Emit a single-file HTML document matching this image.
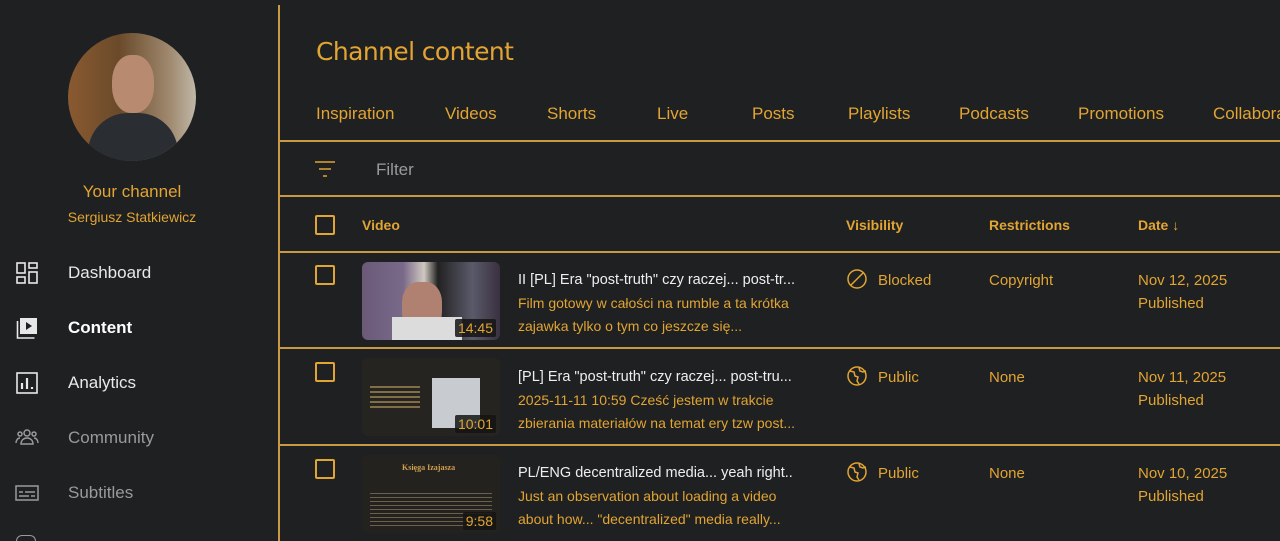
<!DOCTYPE html>
<html style="overflow:hidden;width:1280px;height:541px"><head><meta charset="utf-8"><style>
*{margin:0;padding:0;box-sizing:border-box}
body{width:1280px;height:541px;overflow:hidden;background:#1e2022;font-family:"Liberation Sans",sans-serif;position:relative}
.a{position:absolute;white-space:nowrap}
.g{color:#e2a432}
.w{color:#e8e8e8}
.gr{color:#9a9a9a}
.hl{position:absolute;left:279px;right:0;height:2px;background:#c99a45}
.cb{position:absolute;width:20px;height:20px;border:2px solid #e2a432;border-radius:2px}
.th{position:absolute;border-radius:6px;overflow:hidden;width:138px;height:78px;background:#111}
.dur{position:absolute;right:4px;bottom:3px;background:rgba(20,20,20,.85);color:#e2a432;font-size:14px;padding:1px 3px;border-radius:2px}
.t{font-size:14.5px;color:#eee}
.d{font-size:14px;color:#e2a432;line-height:23px}
.c{font-size:15px;color:#e2a432}
</style></head><body>
<div class="a" style="left:278px;top:5px;width:2px;height:536px;background:#c99a45"></div>
<div class="a" style="left:68px;top:33px;width:128px;height:128px;border-radius:50%;background:linear-gradient(90deg,#8a5a30,#6a4a2a 40%,#a08a70 80%,#c0b8a8);overflow:hidden">
<div style="position:absolute;left:20px;top:80px;width:90px;height:60px;border-radius:40px 40px 0 0;background:#2a2e33"></div>
<div style="position:absolute;left:44px;top:22px;width:42px;height:58px;border-radius:45%;background:#b88a70"></div></div>
<div class="a g" style="left:0;width:264px;text-align:center;top:182px;font-size:17px">Your channel</div>
<div class="a g" style="left:0;width:264px;text-align:center;top:209px;font-size:14px">Sergiusz Statkiewicz</div>
<svg class="a" style="left:16px;top:262px" width="22" height="22" viewBox="0 0 22 22" fill="none" stroke="#e8e8e8" stroke-width="1.6"><rect x="1" y="1" width="8" height="10"/><rect x="13" y="1" width="8" height="5"/><rect x="1" y="15" width="8" height="6"/><rect x="13" y="10" width="8" height="11"/></svg>
<div class="a w" style="left:68px;top:263px;font-size:17px">Dashboard</div>
<svg class="a" style="left:16px;top:317px" width="22" height="22" viewBox="0 0 22 22"><rect x="4" y="1" width="17" height="16" fill="#e8e8e8"/><path d="M10 5v8l6-4z" fill="#1e2022"/><path d="M1.5 4v17h17" fill="none" stroke="#e8e8e8" stroke-width="1.6"/></svg>
<div class="a" style="left:68px;top:318px;font-size:17px;color:#fff;font-weight:bold">Content</div>
<svg class="a" style="left:16px;top:372px" width="22" height="22" viewBox="0 0 22 22" fill="none" stroke="#e8e8e8" stroke-width="1.6"><rect x="1" y="1" width="20" height="20"/><path d="M6 17v-6M11 17V6M16 17v-2" stroke-width="2.2"/></svg>
<div class="a w" style="left:68px;top:373px;font-size:17px">Analytics</div>
<svg class="a" style="left:15px;top:428px" width="24" height="18" viewBox="0 0 24 18" fill="none" stroke="#9a9a9a" stroke-width="1.5"><circle cx="12" cy="5" r="3"/><path d="M6 16c0-4 3-6 6-6s6 2 6 6z"/><circle cx="5" cy="6" r="2"/><circle cx="19" cy="6" r="2"/><path d="M1 15c0-3 2-5 4-5M23 15c0-3-2-5-4-5"/></svg>
<div class="a gr" style="left:68px;top:428px;font-size:17px">Community</div>
<svg class="a" style="left:15px;top:485px" width="24" height="16" viewBox="0 0 24 16" fill="none" stroke="#9a9a9a" stroke-width="1.5"><rect x="1" y="1" width="22" height="14"/><path d="M4 7h4M10 7h10M4 11h10M16 11h4"/></svg>
<div class="a gr" style="left:68px;top:483px;font-size:17px">Subtitles</div>
<div class="a" style="left:16px;top:535px;width:20px;height:6px;border:1.6px solid #9a9a9a;border-bottom:none;border-radius:10px 10px 0 0"></div>
<div class="a g" style="left:316px;top:37px;font-size:25px;font-family:'DejaVu Sans',sans-serif;letter-spacing:-0.6px">Channel content</div>
<div class="a g" style="top:104px;left:316px;font-size:17px">Inspiration</div>
<div class="a g" style="top:104px;left:445px;font-size:17px">Videos</div>
<div class="a g" style="top:104px;left:547px;font-size:17px">Shorts</div>
<div class="a g" style="top:104px;left:657px;font-size:17px">Live</div>
<div class="a g" style="top:104px;left:752px;font-size:17px">Posts</div>
<div class="a g" style="top:104px;left:848px;font-size:17px">Playlists</div>
<div class="a g" style="top:104px;left:959px;font-size:17px">Podcasts</div>
<div class="a g" style="top:104px;left:1078px;font-size:17px">Promotions</div>
<div class="a g" style="top:104px;left:1213px;font-size:17px">Collaborations</div>
<div class="hl" style="top:140px"></div>
<svg class="a" style="left:314px;top:160px" width="22" height="18" viewBox="0 0 22 18" stroke="#e2a432" stroke-width="1.5"><path d="M1 2h20M5 9h12M9 16h4"/></svg>
<div class="a gr" style="left:376px;top:160px;font-size:17px">Filter</div>
<div class="hl" style="top:195px"></div>
<div class="cb" style="left:315px;top:215px"></div>
<div class="a g" style="left:362px;top:217px;font-size:14px;font-weight:bold">Video</div>
<div class="a g" style="left:846px;top:217px;font-size:14px;font-weight:bold">Visibility</div>
<div class="a g" style="left:989px;top:217px;font-size:14px;font-weight:bold">Restrictions</div>
<div class="a g" style="left:1138px;top:217px;font-size:14px;font-weight:bold">Date <span style="font-weight:normal">↓</span></div>
<div class="hl" style="top:251px"></div>
<div class="cb" style="left:315px;top:265px"></div>
<div class="th" style="left:362px;top:262px;background:linear-gradient(90deg,#6a5a78,#7a6a8a 30%,#d0c8c0 45%,#222 55%,#5a5a6a 80%,#3a3040)"><div style="position:absolute;left:40px;top:20px;width:40px;height:50px;border-radius:40%;background:#b08070"></div><div style="position:absolute;left:30px;top:55px;width:70px;height:25px;background:#dcdcdc"></div><div class="dur">14:45</div></div>
<div class="a t" style="left:518px;top:272px">II [PL] Era "post-truth" czy raczej... post-tr...</div>
<div class="a d" style="left:518px;top:292px">Film gotowy w całości na rumble a ta krótka<br>zajawka tylko o tym co jeszcze się...</div>
<svg class="a" style="left:846px;top:268px" width="22" height="22" viewBox="0 0 22 22" fill="none" stroke="#e2a432" stroke-width="1.5"><circle cx="11" cy="11" r="9"/><path d="M5 17L17 5"/></svg>
<div class="a c" style="left:878px;top:272px">Blocked</div>
<div class="a c" style="left:989px;top:272px">Copyright</div>
<div class="a c" style="left:1138px;top:272px">Nov 12, 2025</div>
<div class="a c" style="left:1138px;top:295px">Published</div>
<div class="hl" style="top:347px"></div>
<div class="cb" style="left:315px;top:362px"></div>
<div class="th" style="left:362px;top:358px;background:#262420"><div style="position:absolute;left:70px;top:20px;width:48px;height:50px;background:#c8ccd0"></div><div style="position:absolute;left:8px;top:28px;width:50px;height:24px;background:repeating-linear-gradient(#c0a060 0 2px,transparent 2px 5px);opacity:.6"></div><div class="dur">10:01</div></div>
<div class="a t" style="left:518px;top:369px">[PL] Era "post-truth" czy raczej... post-tru...</div>
<div class="a d" style="left:518px;top:389px">2025-11-11 10:59 Cześć jestem w trakcie<br>zbierania materiałów na temat ery tzw post...</div>
<svg class="a" style="left:846px;top:365px" width="22" height="22" viewBox="0 0 22 22" fill="none" stroke="#e2a432" stroke-width="1.5"><circle cx="11" cy="11" r="9"/><path d="M4 6l4 1 1 4 3 1-1 4 2 3M13 3l1 3 3 1 3-1"/></svg>
<div class="a c" style="left:878px;top:369px">Public</div>
<div class="a c" style="left:989px;top:369px">None</div>
<div class="a c" style="left:1138px;top:369px">Nov 11, 2025</div>
<div class="a c" style="left:1138px;top:392px">Published</div>
<div class="hl" style="top:444px"></div>
<div class="cb" style="left:315px;top:459px"></div>
<div class="th" style="left:362px;top:455px;background:#24221e"><div style="position:absolute;left:8px;top:38px;width:122px;height:36px;background:repeating-linear-gradient(#8a7a60 0 1px,transparent 1px 4px);opacity:.7"></div><div style="position:absolute;left:40px;top:8px;color:#d0a050;font-size:8px;font-family:'Liberation Serif',serif;font-weight:bold">Księga Izajasza</div><div class="dur">9:58</div></div>
<div class="a t" style="left:518px;top:465px">PL/ENG decentralized media... yeah right..</div>
<div class="a d" style="left:518px;top:485px">Just an observation about loading a video<br>about how... "decentralized" media really...</div>
<svg class="a" style="left:846px;top:461px" width="22" height="22" viewBox="0 0 22 22" fill="none" stroke="#e2a432" stroke-width="1.5"><circle cx="11" cy="11" r="9"/><path d="M4 6l4 1 1 4 3 1-1 4 2 3M13 3l1 3 3 1 3-1"/></svg>
<div class="a c" style="left:878px;top:465px">Public</div>
<div class="a c" style="left:989px;top:465px">None</div>
<div class="a c" style="left:1138px;top:465px">Nov 10, 2025</div>
<div class="a c" style="left:1138px;top:488px">Published</div>
</body></html>
